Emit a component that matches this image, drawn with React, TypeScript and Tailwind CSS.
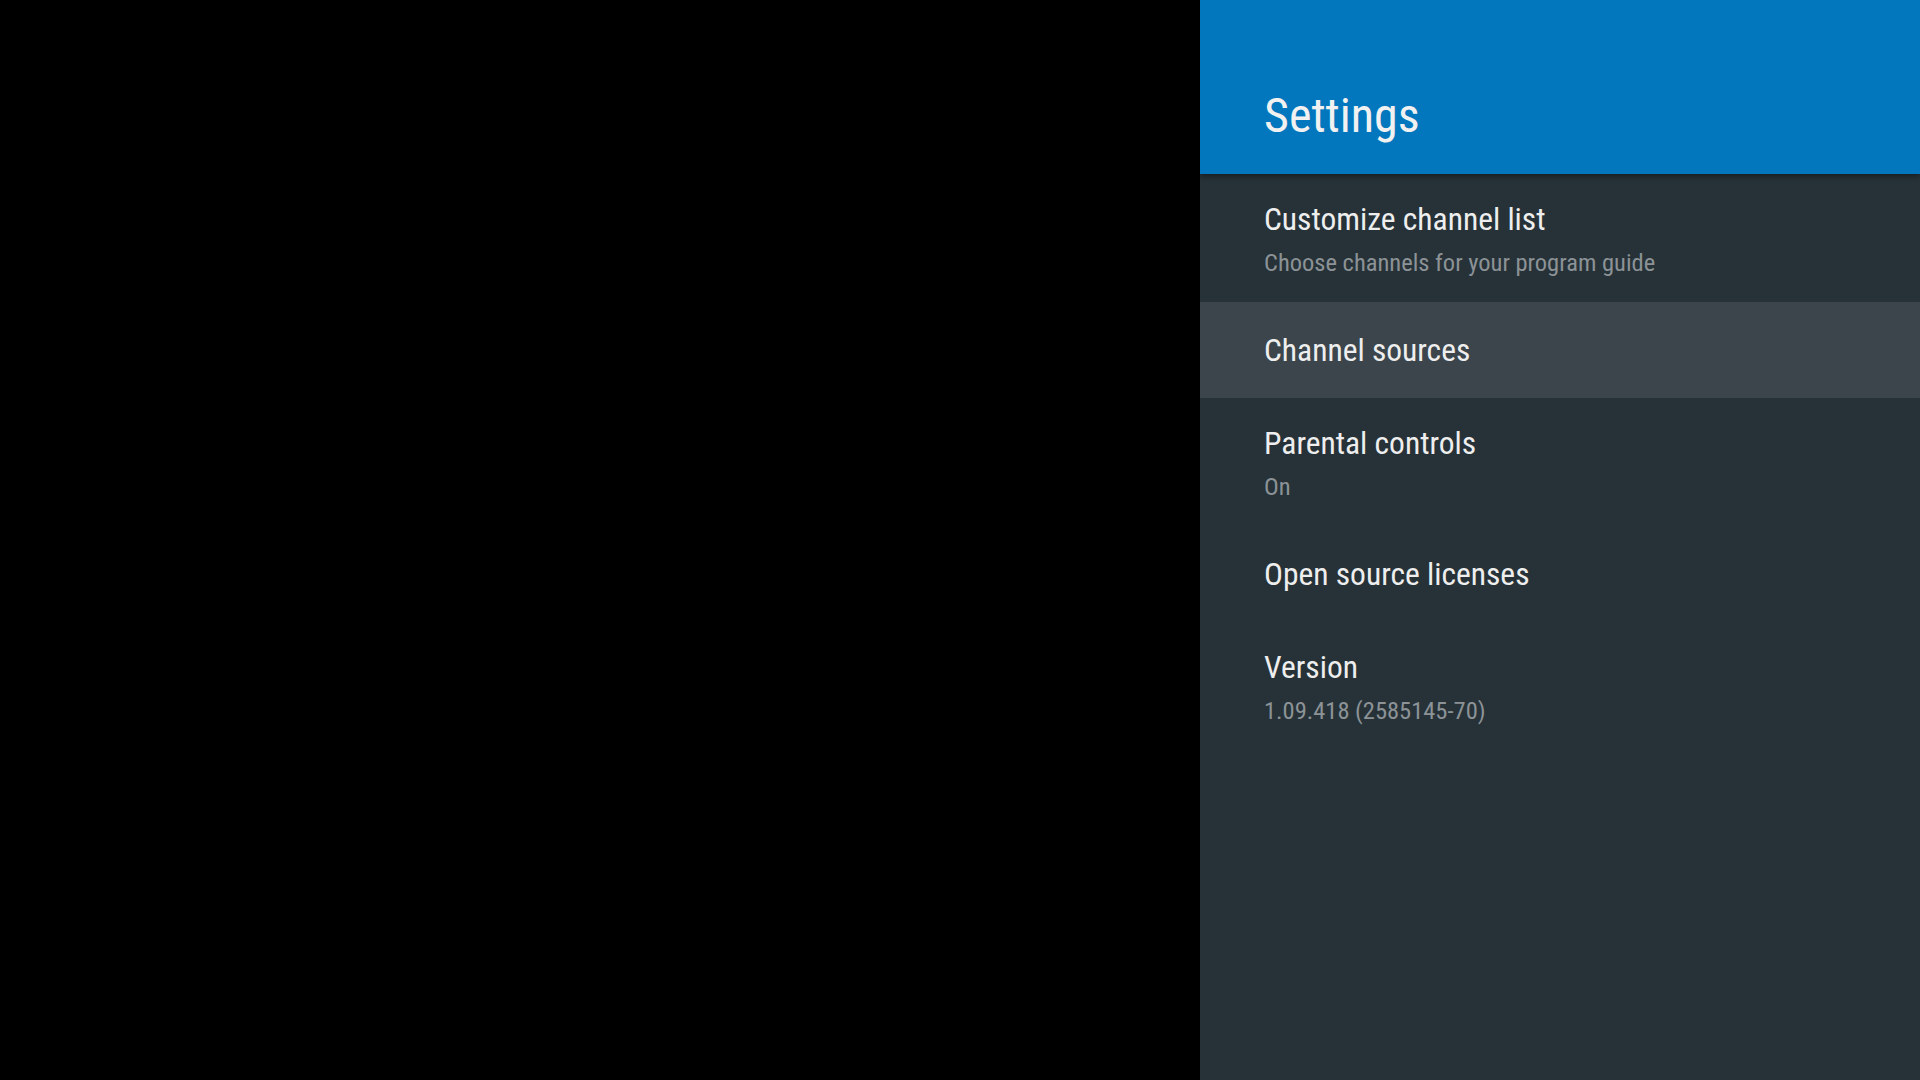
const items: { title: string; subtitle?: string; selected?: boolean }[] = [
  { title: 'Customize channel list', subtitle: 'Choose channels for your program guide' },
  { title: 'Channel sources', selected: true },
  { title: 'Parental controls', subtitle: 'On' },
  { title: 'Open source licenses' },
  { title: 'Version', subtitle: '1.09.418 (2585145-70)' },
];

export default function App() {
  return (
    <div className="flex h-[1080px] w-[1920px] overflow-hidden bg-black font-['Roboto_Condensed',Roboto,sans-serif] font-stretch-condensed">
      <div className="flex-1" />
      <aside className="flex w-[720px] flex-col bg-[#263238]">
        <header className="relative z-10 flex h-[174px] items-end bg-[#0277bd] px-16 pb-[30px] shadow-[0_2px_6px_rgba(0,0,0,0.45)]">
          <h1 className="text-[48px] leading-[56px] text-[#f1f1f1]">Settings</h1>
        </header>
        <ul className="flex flex-col">
          {items.map((it) => (
            <li
              key={it.title}
              className={`flex flex-col justify-center px-16 ${it.subtitle ? 'h-[128px]' : 'h-[96px]'} ${it.selected ? 'bg-[#3b454b]' : ''}`}
            >
              <div className="mt-[2px] text-[31.5px] leading-[48px] text-[#eeeeee]">{it.title}</div>
              {it.subtitle && (
                <div className="text-[24.5px] leading-[38px] text-[#8c9296]">{it.subtitle}</div>
              )}
            </li>
          ))}
        </ul>
      </aside>
    </div>
  );
}
